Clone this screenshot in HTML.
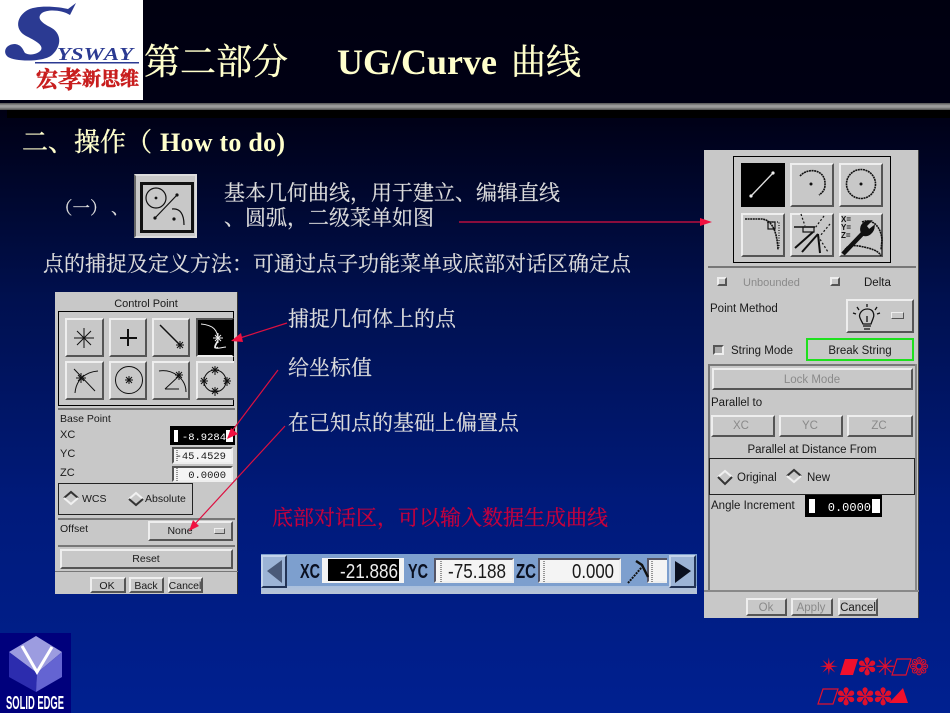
<!DOCTYPE html>
<html><head><meta charset="utf-8"><style>
html,body{margin:0;padding:0}
#p{position:relative;width:950px;height:713px;overflow:hidden;background:linear-gradient(180deg,#000010 0,#000014 110px,#00104f 300px,#001a7a 500px,#002090 713px);font-family:"Liberation Sans",sans-serif}
#p div{position:absolute;box-sizing:border-box}
.g{background:#c8c8c8}
.b{background:#c8c8c8;border:2px solid;border-color:#eee #555 #555 #eee}
.k{background:#000;border:2px solid;border-color:#555 #eee #eee #555}
.f{background:#f4f4f4;border:2px solid;border-color:#555 #eee #eee #555}
svg{position:absolute;left:0;top:0}
text{text-spacing-trim:space-all;font-kerning:none}
</style></head><body><div id="p">
<div style="left:0;top:103px;width:950px;height:7px;background:linear-gradient(180deg,#555,#a0a0a0 40%,#999 60%,#505050)"></div>
<div style="left:7px;top:110px;width:943px;height:8px;background:#000"></div>
<div style="left:0;top:0;width:143px;height:100px;background:#fff"></div>
<div style="left:0;top:633px;width:71px;height:80px;background:#00007c"></div>

<div class="g" style="left:55px;top:292px;width:183px;height:302px;border-right:1px solid #333"></div>
<div style="left:58px;top:311px;width:176px;height:95px;border:1px solid #000"></div>
<div class="b" style="left:65px;top:318px;width:39px;height:39px"></div>
<div class="b" style="left:109px;top:318px;width:38px;height:39px"></div>
<div class="b" style="left:152px;top:318px;width:38px;height:39px"></div>
<div style="left:196px;top:318px;width:38px;height:39px;background:#000;border:2px solid;border-color:#555 #000 #eee #555"></div>
<div class="b" style="left:65px;top:361px;width:39px;height:39px"></div>
<div class="b" style="left:109px;top:361px;width:38px;height:39px"></div>
<div class="b" style="left:152px;top:361px;width:38px;height:39px"></div>
<div class="b" style="left:196px;top:361px;width:38px;height:39px;border-right:0"></div>
<div style="left:58px;top:408px;width:177px;height:2px;background:#777"></div>
<div style="left:170px;top:426px;width:65px;height:19px;background:#000"></div>
<div style="left:174px;top:430px;width:59px;height:12px;background:#fff"></div>
<div style="left:178px;top:430px;width:48px;height:12px;background:#000"></div>
<div class="f" style="left:172px;top:447px;width:61px;height:17px"></div>
<div class="f" style="left:172px;top:466px;width:61px;height:16px"></div>
<div style="left:58px;top:483px;width:135px;height:32px;border:1px solid #222"></div>
<div style="left:58px;top:518px;width:177px;height:2px;background:#777"></div>
<div class="b" style="left:148px;top:521px;width:85px;height:20px"></div>
<div class="b" style="left:214px;top:528px;width:11px;height:6px;border-width:1px"></div>
<div style="left:58px;top:545px;width:177px;height:2px;background:#777"></div>
<div class="b" style="left:60px;top:549px;width:173px;height:20px"></div>
<div style="left:55px;top:571px;width:183px;height:1px;background:#777"></div>
<div class="b" style="left:90px;top:577px;width:36px;height:16px"></div>
<div class="b" style="left:129px;top:577px;width:35px;height:16px"></div>
<div class="b" style="left:168px;top:577px;width:35px;height:16px"></div>

<div class="g" style="left:704px;top:150px;width:215px;height:468px;border-right:1px solid #444"></div>
<div style="left:733px;top:156px;width:158px;height:107px;border:1px solid #000"></div>
<div style="left:741px;top:163px;width:44px;height:44px;background:#000"></div>
<div class="b" style="left:790px;top:163px;width:44px;height:44px"></div>
<div class="b" style="left:839px;top:163px;width:44px;height:44px"></div>
<div class="b" style="left:741px;top:213px;width:44px;height:44px"></div>
<div class="b" style="left:790px;top:213px;width:44px;height:44px"></div>
<div class="b" style="left:839px;top:213px;width:44px;height:44px"></div>
<div style="left:708px;top:266px;width:208px;height:2px;background:#777"></div>
<div class="b" style="left:717px;top:277px;width:10px;height:9px"></div>
<div class="b" style="left:830px;top:277px;width:10px;height:9px"></div>
<div class="b" style="left:846px;top:299px;width:68px;height:34px"></div>
<div class="b" style="left:891px;top:312px;width:13px;height:7px;border-width:1px"></div>
<div style="left:713px;top:345px;width:11px;height:10px;background:#aaa;border:2px solid;border-color:#555 #eee #eee #555"></div>
<div style="left:806px;top:338px;width:108px;height:23px;border:2px solid #1ee01e"></div>
<div style="left:708px;top:364px;width:208px;height:2px;background:#777"></div>
<div style="left:708px;top:364px;width:2px;height:226px;background:#777"></div>
<div style="left:915px;top:364px;width:2px;height:226px;background:#888"></div>
<div class="b" style="left:712px;top:368px;width:201px;height:22px"></div>
<div class="b" style="left:711px;top:415px;width:64px;height:22px"></div>
<div class="b" style="left:779px;top:415px;width:64px;height:22px"></div>
<div class="b" style="left:847px;top:415px;width:66px;height:22px"></div>
<div style="left:709px;top:458px;width:206px;height:37px;border:1px solid #222"></div>
<div style="left:805px;top:495px;width:77px;height:22px;background:#000"></div>
<div style="left:809px;top:499px;width:71px;height:14px;background:#fff"></div>
<div style="left:815px;top:499px;width:57px;height:14px;background:#000"></div>
<div style="left:704px;top:590px;width:215px;height:2px;background:#888"></div>
<div class="b" style="left:746px;top:598px;width:41px;height:18px"></div>
<div class="b" style="left:791px;top:598px;width:42px;height:18px"></div>
<div class="b" style="left:838px;top:598px;width:40px;height:18px"></div>

<div style="left:261px;top:554px;width:436px;height:40px;background:#7d9fce"></div>
<div style="left:261px;top:586px;width:436px;height:8px;background:linear-gradient(180deg,#a9bfdd,#b8c4d6)"></div>
<div style="left:261px;top:555px;width:26px;height:33px;background:#9cb4d6;border:2px solid;border-color:#c4d4ea #223355 #223355 #c4d4ea"></div>
<div style="left:669px;top:555px;width:27px;height:33px;background:#9cb4d6;border:2px solid;border-color:#c4d4ea #223355 #223355 #c4d4ea"></div>
<div style="left:322px;top:558px;width:82px;height:25px;background:#f4f4f4"></div>
<div style="left:328px;top:559px;width:71px;height:22px;background:#000"></div>
<div class="f" style="left:434px;top:558px;width:80px;height:25px;border-color:#556 #eee #eee #556"></div>
<div class="f" style="left:538px;top:558px;width:83px;height:25px;border-color:#556 #eee #eee #556"></div>
<div class="f" style="left:647px;top:558px;width:20px;height:25px;border-color:#556 #eee #eee #556;border-right:0"></div>

<div style="left:134px;top:174px;width:63px;height:64px;background:#c8c8c8;border:2px solid;border-color:#ddd #ddd #ddd #666"></div>
<div style="left:140px;top:182px;width:54px;height:51px;background:#c8c8c8;border:3px solid #111"></div>

<svg width="950" height="713" viewBox="0 0 950 713" xmlns="http://www.w3.org/2000/svg">
<g font-family="'Liberation Serif','Noto Serif CJK SC',serif">
<path fill="#2b3a92" d="M76 3 L70 15 C62 10 48 9 42 13 C36 18 42 23 50 27 C62 33 62 46 52 55 C44 62 16 62 8 57 C2 52 6 44 15 44 C22 45 23 50 25 53 C30 56 38 54 41 50 C44 45 34 40 26 36 C15 30 16 18 26 11 C36 4 60 7 68 9 Z"/>
<text x="57" y="60" font-size="18" font-weight="bold" font-style="italic" fill="#2b3a92" textLength="76" lengthAdjust="spacingAndGlyphs">YSWAY</text>
<rect x="35" y="62" width="104" height="1.5" fill="#2b3a92"/>
<g fill="#c81e1e" font-weight="bold" stroke="#c81e1e" stroke-width=".6"><text x="36" y="87" font-size="22">宏</text><text x="58" y="88" font-size="24">孝</text><text x="82" y="85" font-size="19">新思维</text></g>

<g stroke="#ffffcc" stroke-width=".35" fill="#ffffcc">
<text x="144" y="74" font-size="36">第二部分</text>
<text x="511" y="74" font-size="35">曲线</text>
<text x="22" y="151" font-size="26">二、操作（</text>
</g>
<text x="337" y="74" font-size="36" font-weight="bold" fill="#ffffcc">UG/Curve</text>
<text x="160" y="151" font-size="26" font-weight="bold" fill="#ffffcc" textLength="125">How to do)</text>
<g font-size="21" fill="#dcdcdc" stroke="#dcdcdc" stroke-width=".2">
<text x="55 72.5 90 111" y="214" font-size="17.5">（一）、</text>
<text x="224" y="200">基本几何曲线，用于建立、编辑直线</text>
<text x="224" y="225">、圆弧，二级菜单如图</text>
<text x="43" y="271">点的捕捉及定义方法：可通过点子功能菜单或底部对话区确定点</text>
<text x="288" y="326">捕捉几何体上的点</text>
<text x="288" y="375">给坐标值</text>
<text x="288" y="430">在已知点的基础上偏置点</text>
</g>
<text x="272" y="525" font-size="21" fill="#c8003c" stroke="#c8003c" stroke-width=".2">底部对话区，可以输入数据生成曲线</text>
</g>

<!-- tool icon -->
<g fill="none" stroke="#111" stroke-width="1.2">
<circle cx="156" cy="198" r="10"/><path d="M155 218 L177 195" /><path d="M172 209 C180 208 184 214 184 225"/>
</g>
<g fill="#111"><circle cx="156" cy="198" r="1.4"/><circle cx="155" cy="218" r="1.6"/><circle cx="177" cy="195" r="1.6"/><circle cx="174" cy="219" r="1.6"/></g>

<!-- control point icons -->
<g fill="none" stroke="#111" stroke-width="1">
<path d="M84 328V348M74 338H94M77 331L91 345M91 331L77 345"/>
<path d="M128 329V346M120 338H137" stroke-width="2"/>
<path d="M160 325 L180 345" stroke-width="1.5"/><path d="M180 341V349M176 345H184M177 342L183 348M183 342L177 348"/>
<path d="M75 393 C76 380 85 372 98 371M74 369L95 391"/>
<path d="M81 373V383M76 378H86M78 375L84 381M84 375L78 381"/>
<circle cx="129" cy="380" r="13.5"/><path d="M129 376V384M125 380H133M126 377L132 383M132 377L126 383"/>
<path d="M159 371 C172 369 186 378 186 392M165 389 L180 375M165 389H179"/>
<path d="M179 371V380M175 375H183M176 372L182 378M182 372L176 378"/>
<circle cx="215" cy="381" r="11"/>
<path d="M215 366V375M211 370H219M212 367L218 373M218 367L212 373M215 387V396M211 391H219M212 388L218 394M218 388L212 394M204 377V386M200 381H208M201 378L207 384M207 378L201 384M227 377V386M223 381H231M224 378L230 384M230 378L224 384"/>
</g>
<g fill="none" stroke="#eee" stroke-width="1">
<path d="M201 324 C213 325 218 330 218 340 C214 346 213 350 218 347M218 341L216 345C214 350 218 348 226 347"/><path d="M218 333V343M213 338H223M215 335L221 341M221 335L215 341"/>
</g>
<!-- radio diamonds -->
<g fill="none" stroke-width="2">
<path d="M64 498L71 492L78 498" stroke="#333"/><path d="M64 498L71 504L78 498" stroke="#f0f0f0"/>
<path d="M129 499L136 493L143 499" stroke="#f0f0f0"/><path d="M129 499L136 505L143 499" stroke="#333"/>
<path d="M718 477L725 471L732 477" stroke="#f0f0f0"/><path d="M718 477L725 484L732 477" stroke="#333"/>
<path d="M787 476L794 470L801 476" stroke="#333"/><path d="M787 476L794 482L801 476" stroke="#f0f0f0"/>
</g>

<!-- curve icons -->
<g fill="none" stroke="#ddd" stroke-width="1.4"><path d="M751 196 L773 173"/></g><g fill="#eee"><circle cx="751" cy="196" r="1.6"/><circle cx="773" cy="173" r="1.6"/></g>
<circle cx="811" cy="184" r="1.5" fill="#111"/><circle cx="861" cy="184" r="1.5" fill="#111"/>
<g fill="none" stroke="#111" stroke-width="1.6" stroke-dasharray="2 .6">
<path d="M800 176 C808 167 826 169 825 185 C825 190 822 193 819 195"/>
<circle cx="861" cy="184" r="14.5"/>
<path d="M745 219 H761 C770 219 777 228 778 250"/>
<path d="M767 222 L779 222 L779 248" stroke-dasharray="1 1.5" stroke-width="1.2"/>
<path d="M845 250 C848 243 860 246 868 248 C876 250 880 253 881 256"/>
<path d="M862 222 C872 218 881 226 882 240 L881 250"/>
</g>
<rect x="768" y="222" width="7" height="7" fill="none" stroke="#111" stroke-width="1.2"/>
<g fill="none" stroke="#111" stroke-width="1.2">
<path d="M794 227H815" stroke-width="1.6"/><path d="M795 248L813 232M802 252L818 234M818 234L820 253" stroke-width="2"/>
<rect x="803" y="227" width="11" height="5"/>
<path d="M801 214L805 226M824 216L815 228M830 224L820 236M818 236L828 252" stroke-dasharray="2 2"/>
</g>
<g stroke="#111" fill="none"><path d="M843 254 L865 231" stroke-width="4.5"/><path d="M861 231 C860 225 864 221 871 221 L866 226 L869 230 L874 226 C874 232 868 237 863 235Z" fill="#111" stroke-width="1.5"/></g>
<g font-family="'Liberation Sans',sans-serif" font-size="8" font-weight="bold" fill="#111"><text x="841" y="222">X=</text><text x="841" y="230">Y=</text><text x="841" y="238">Z=</text></g>

<!-- bulb -->
<g fill="none" stroke="#111" stroke-width="1.3"><path d="M863 324 C860 318 858 316 861 312 C864 308 871 308 873 312 C875 316 873 318 871 324Z"/><path d="M863 326H871M864 329H870M867 316V322M857 307L859 310M877 307L875 310M867 304V307M853 313L856 314M880 313L877 314" /></g>

<!-- I-beam cursors -->
<g fill="none" stroke="#333" stroke-width="1" stroke-dasharray="1 1">
<path d="M177 450V462M177 468V481M441 561V582M544 561V582M652 561V582"/>
</g>
<g fill="#fff"><rect x="175" y="431" width="2" height="10"/><rect x="811" y="500" width="2" height="12"/></g>

<!-- bar icons -->
<path d="M267 571 L282 560 V583Z" fill="#4a5a78"/><path d="M675 561 L691 571 L675 583Z" fill="#0a1020"/>
<path d="M628 583 L642 567" stroke="#111" stroke-width="2" stroke-dasharray="2 1" fill="none"/><path d="M636 561 L642 565 L648 577" stroke="#111" stroke-width="2.4" fill="none"/>

<!-- UI text -->
<g font-family="'Liberation Sans',sans-serif" font-size="11" fill="#1a1a1a">
<text x="146" y="307" text-anchor="middle">Control Point</text>
<text x="60" y="422" font-size="10.5">Base Point</text>
<text x="60" y="438">XC</text><text x="60" y="457">YC</text><text x="60" y="476">ZC</text>
<text x="82" y="502" font-size="10.5">WCS</text><text x="145" y="502" font-size="10.5">Absolute</text>
<text x="60" y="532" font-size="10.5">Offset</text>
<text x="180" y="534" text-anchor="middle" font-size="10.5">None</text>
<text x="146" y="562" text-anchor="middle" font-size="10.5">Reset</text>
<text x="107" y="589" text-anchor="middle" font-size="10.5">OK</text>
<text x="146" y="589" text-anchor="middle" font-size="10.5">Back</text>
<text x="185" y="589" text-anchor="middle" font-size="10.5">Cancel</text>
<g font-family="'Liberation Mono',monospace" font-size="10.5">
<text x="226" y="440" text-anchor="end" fill="#fff">-8.9284</text>
<text x="226" y="459" text-anchor="end">-45.4529</text>
<text x="226" y="478" text-anchor="end">0.0000</text>
</g>
<g font-size="11.5">
<text x="743" y="286" fill="#8a8a8a" font-size="11">Unbounded</text>
<text x="864" y="286">Delta</text>
<text x="710" y="312">Point Method</text>
<text x="731" y="354">String Mode</text>
<text x="860" y="354" text-anchor="middle">Break String</text>
<text x="812" y="383" text-anchor="middle" fill="#8a8a8a">Lock Mode</text>
<text x="711" y="406">Parallel to</text>
<text x="741" y="429" text-anchor="middle" fill="#8a8a8a">XC</text>
<text x="810" y="429" text-anchor="middle" fill="#8a8a8a">YC</text>
<text x="879" y="429" text-anchor="middle" fill="#8a8a8a">ZC</text>
<text x="812" y="453" text-anchor="middle">Parallel at Distance From</text>
<text x="737" y="481">Original</text>
<text x="807" y="481">New</text>
<text x="711" y="509">Angle Increment</text>
<text x="766" y="611" text-anchor="middle" fill="#8a8a8a">Ok</text>
<text x="811" y="611" text-anchor="middle" fill="#8a8a8a">Apply</text>
<text x="858" y="611" text-anchor="middle">Cancel</text>
</g>
<text x="871" y="511" text-anchor="end" fill="#fff" font-family="'Liberation Mono',monospace" font-size="12">0.0000</text>
<g font-family="'Liberation Sans',sans-serif" font-size="20">
<text x="340" y="578" fill="#eee" textLength="58" lengthAdjust="spacingAndGlyphs">-21.886</text>
<text x="448" y="578" textLength="58" lengthAdjust="spacingAndGlyphs">-75.188</text>
<text x="572" y="578" textLength="42" lengthAdjust="spacingAndGlyphs">0.000</text>
</g>
<g font-size="20" font-weight="bold" fill="#0a1020">
<text x="300" y="578" textLength="20" lengthAdjust="spacingAndGlyphs">XC</text>
<text x="408" y="578" textLength="20" lengthAdjust="spacingAndGlyphs">YC</text>
<text x="516" y="578" textLength="20" lengthAdjust="spacingAndGlyphs">ZC</text>
</g>
</g>

<!-- arrows -->
<g stroke="#dc1040" stroke-width="1.2" fill="none">
<path d="M459 222H700M287 323L240 338M278 370L232 431M285 426L194 525"/>
</g>
<g fill="#f01040">
<path d="M712 222L700 218V226Z"/><path d="M231 341L241 333L243 342Z"/><path d="M227 439L231 428L238 434Z"/><path d="M189 531L193 520L199 526Z"/>
</g>

<!-- solid edge -->
<path d="M36 636L62 652L37 673L9 652Z" fill="#9c9ce0"/>
<path d="M9 652L37 673L36 692L9 677Z" fill="#2c2cae"/>
<path d="M62 652V677L36 692L37 673Z" fill="#6464d2"/>
<path d="M22 646L37 672L52 647" fill="none" stroke="#fff" stroke-width="3"/>
<text x="6" y="709" font-family="'Liberation Sans',sans-serif" font-size="18" font-weight="bold" fill="#fff" textLength="58" lengthAdjust="spacingAndGlyphs">SOLID EDGE</text>

<!-- dingbats -->
<g font-family="'DejaVu Sans',sans-serif" font-size="24" fill="#e0102c">
<text x="819" y="675">✴</text><text x="857" y="675">✽</text><text x="875" y="675">✳</text><text x="909" y="675">❁</text>
<text x="836" y="705">✽</text><text x="855" y="705">✽</text><text x="873" y="705">✽</text>
</g>
<path d="M845 659H858L853 675H840Z" fill="#f0102c"/>
<path d="M897 659H911L906 675H892Z" fill="none" stroke="#e0102c" stroke-width="1.2"/>
<path d="M823 689H838L833 704H818Z" fill="none" stroke="#e0102c" stroke-width="1.2"/>
<path d="M903 688L908 703H889Z" fill="#f0102c"/>
</svg>
</div></body></html>
